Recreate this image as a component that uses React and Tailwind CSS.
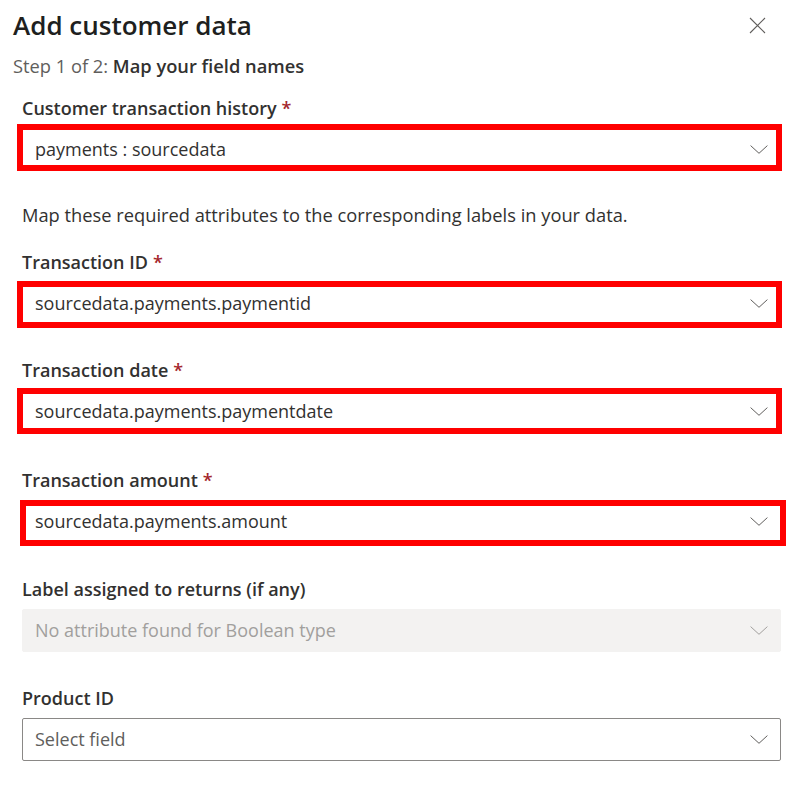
import React from "react";

const FONT = { fontFamily: '"Open Sans", "Noto Sans", Arial, sans-serif' };

function Chevron({ color = "#605e5c" }) {
  return (
    <svg width="18" height="9" viewBox="0 0 18 9" className="shrink-0">
      <path d="M0.6 0.6 L9 8.3 L17.4 0.6" fill="none" stroke={color} strokeWidth="1" />
    </svg>
  );
}

function Label({ text, required, mt }) {
  return (
    <div className={`h-[40px] flex items-center text-[18px] font-semibold text-[#323130] ${mt}`}>
      {text}
      {required && <span className="text-[#a4262c] ml-[5px]">*</span>}
    </div>
  );
}

function Dropdown({ value, disabled, placeholder, highlight }) {
  return (
    <div
      className={`relative h-[43px] rounded-[2px] flex items-center justify-between pl-[12px] pr-[12px] ${
        disabled ? "bg-[#f3f2f1] border border-[#f3f2f1]" : "bg-white border border-[#8a8886]"
      }`}
    >
      <span
        className={`text-[18px] ${
          disabled ? "text-[#a19f9d]" : placeholder ? "text-[#605e5c]" : "text-[#323130]"
        }`}
      >
        {value}
      </span>
      <Chevron color={disabled ? "#a19f9d" : "#605e5c"} />
      {highlight}
    </div>
  );
}

export default function App() {
  return (
    <div className="w-[799px] h-[805px] bg-white overflow-hidden" style={FONT}>
      <div className="h-[50px] flex items-center justify-between pl-[13px] pr-[33px]">
        <div className="text-[26px] font-semibold text-[#201f1e]">Add customer data</div>
        <svg width="17" height="17" viewBox="0 0 17 17">
          <path d="M1 1 L16 16 M16 1 L1 16" stroke="#605e5c" strokeWidth="1.1" fill="none" />
        </svg>
      </div>
      <div className="h-[32px] flex items-center pl-[13px] text-[18.3px] text-[#605e5c]">
        Step 1 of 2:&nbsp;<span className="font-semibold text-[#323130]">Map your field names</span>
      </div>

      <div className="pl-[22px] pr-[18px]">
        <Label text="Customer transaction history" required mt="mt-[6px]" />
        <Dropdown
          value="payments : sourcedata"
          highlight={
            <div className="absolute pointer-events-none border-[6px] border-[#ff0000] left-[-6px] top-[-5px] right-[-2px] bottom-[-1px]" />
          }
        />

        <div className="mt-[28px] h-[32px] flex items-center text-[18.3px] text-[#323130]">
          Map these required attributes to the corresponding labels in your data.
        </div>

        <Label text="Transaction ID" required mt="mt-[11px]" />
        <Dropdown
          value="sourcedata.payments.paymentid"
          highlight={
            <div className="absolute pointer-events-none border-[6px] border-[#ff0000] left-[-6px] top-[-2px] right-[-2px] bottom-[-4px]" />
          }
        />

        <Label text="Transaction date" required mt="mt-[25px]" />
        <Dropdown
          value="sourcedata.payments.paymentdate"
          highlight={
            <div className="absolute pointer-events-none border-[6px] border-[#ff0000] left-[-6px] top-[-3px] right-[-2px] bottom-[-2px]" />
          }
        />

        <Label text="Transaction amount" required mt="mt-[27px]" />
        <Dropdown
          value="sourcedata.payments.amount"
          highlight={
            <div className="absolute pointer-events-none border-[6px] border-[#ff0000] left-[-3px] top-[-1px] right-[-6px] bottom-[-4px]" />
          }
        />

        <Label text="Label assigned to returns (if any)" mt="mt-[26px]" />
        <Dropdown value="No attribute found for Boolean type" disabled />

        <Label text="Product ID" mt="mt-[26px]" />
        <Dropdown value="Select field" placeholder />
      </div>
    </div>
  );
}
